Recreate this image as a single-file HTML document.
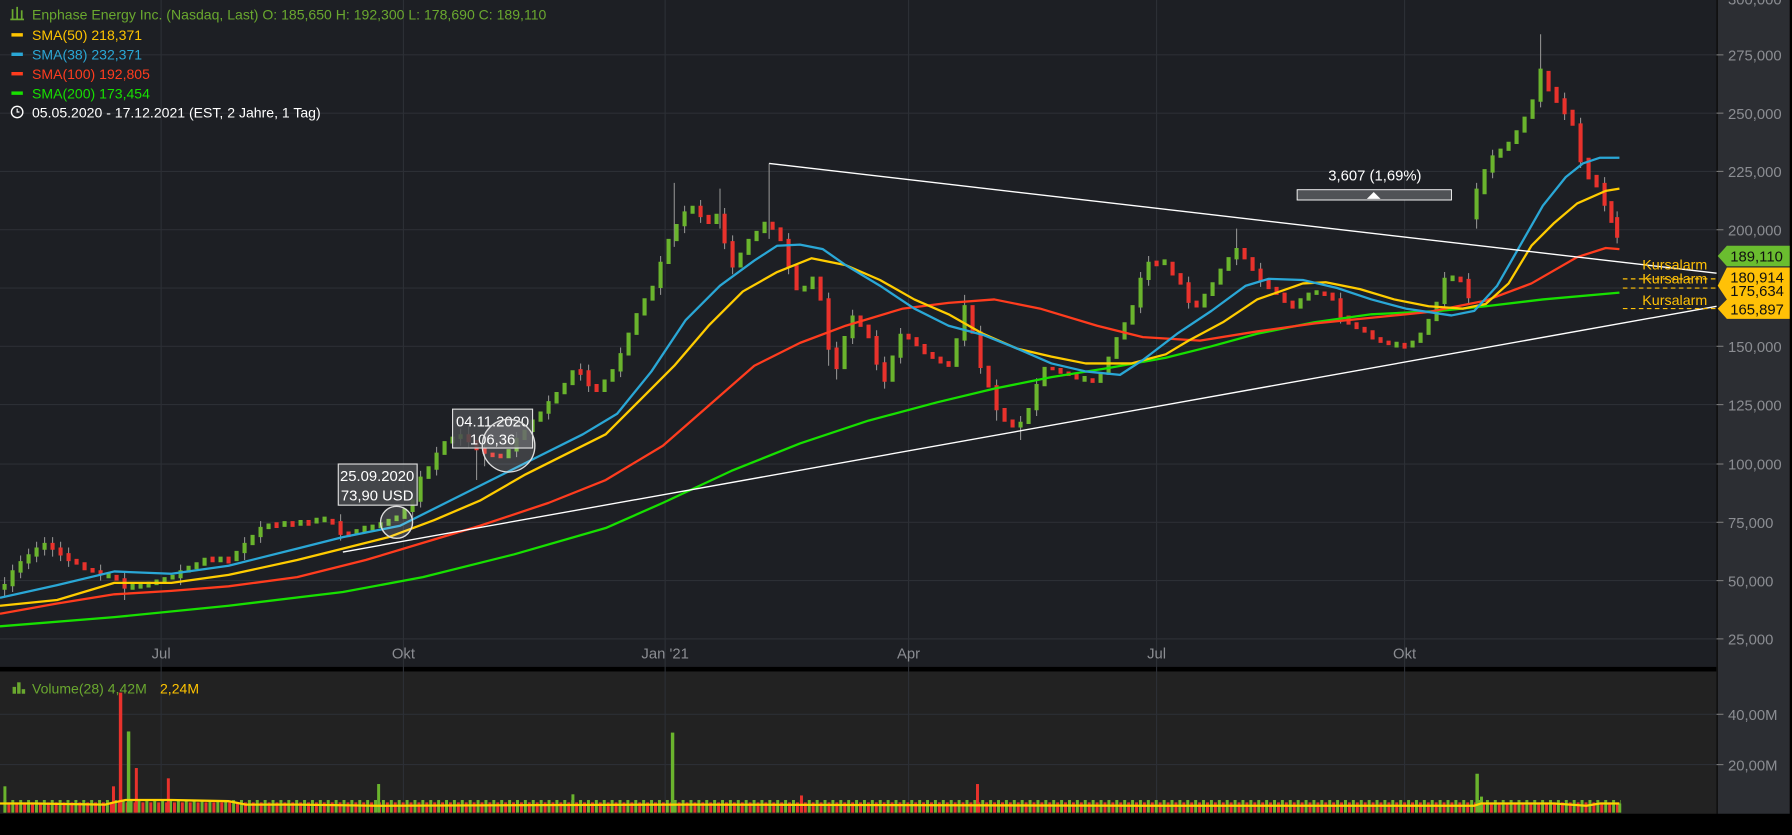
<!DOCTYPE html>
<html><head><meta charset="utf-8"><style>
html,body{margin:0;padding:0;background:#000;overflow:hidden}
svg{display:block}
text{font-family:"Liberation Sans",sans-serif}
</style></head><body>
<svg width="1792" height="835" viewBox="0 0 1568 730.6" preserveAspectRatio="none" xmlns="http://www.w3.org/2000/svg">
<rect x="0" y="0" width="1568" height="731" fill="#000"/>
<rect x="0" y="0" width="1502" height="583.5" fill="#1d1f24"/>
<rect x="1503" y="0" width="63" height="712" fill="#2c2e33"/>
<rect x="0" y="587.5" width="1502" height="124.5" fill="#222222"/>
<line x1="1502.5" y1="0" x2="1502.5" y2="712" stroke="#111" stroke-width="1.5"/>
<g stroke="#2c2f35" stroke-width="1">
<line x1="0" y1="48" x2="1502" y2="48"/><line x1="0" y1="99" x2="1502" y2="99"/><line x1="0" y1="150" x2="1502" y2="150"/><line x1="0" y1="201" x2="1502" y2="201"/><line x1="0" y1="252" x2="1502" y2="252"/><line x1="0" y1="303" x2="1502" y2="303"/><line x1="0" y1="354" x2="1502" y2="354"/><line x1="0" y1="406" x2="1502" y2="406"/><line x1="0" y1="457" x2="1502" y2="457"/><line x1="0" y1="508" x2="1502" y2="508"/><line x1="0" y1="559" x2="1502" y2="559"/>
<line x1="0" y1="625" x2="1502" y2="625"/><line x1="0" y1="669" x2="1502" y2="669"/>
<line x1="141" y1="0" x2="141" y2="712"/><line x1="353" y1="0" x2="353" y2="712"/><line x1="582" y1="0" x2="582" y2="712"/><line x1="795" y1="0" x2="795" y2="712"/><line x1="1012" y1="0" x2="1012" y2="712"/><line x1="1229" y1="0" x2="1229" y2="712"/>
</g>
<g stroke="#777" stroke-width="1">
<line x1="1502" y1="48" x2="1508" y2="48"/><line x1="1502" y1="99" x2="1508" y2="99"/><line x1="1502" y1="150" x2="1508" y2="150"/><line x1="1502" y1="201" x2="1508" y2="201"/><line x1="1502" y1="303" x2="1508" y2="303"/><line x1="1502" y1="354" x2="1508" y2="354"/><line x1="1502" y1="406" x2="1508" y2="406"/><line x1="1502" y1="457" x2="1508" y2="457"/><line x1="1502" y1="508" x2="1508" y2="508"/><line x1="1502" y1="559" x2="1508" y2="559"/><line x1="1502" y1="625" x2="1508" y2="625"/><line x1="1502" y1="669" x2="1508" y2="669"/>
</g>
<g fill="#8b8d92" font-size="13">
<text x="1512" y="4">300,000</text><text x="1512" y="53">275,000</text><text x="1512" y="104">250,000</text><text x="1512" y="155">225,000</text><text x="1512" y="206">200,000</text><text x="1512" y="308">150,000</text><text x="1512" y="359">125,000</text><text x="1512" y="411">100,000</text><text x="1512" y="462">75,000</text><text x="1512" y="513">50,000</text><text x="1512" y="564">25,000</text>
<text x="1512" y="630">40,00M</text><text x="1512" y="674">20,00M</text>
</g>
<g fill="#8b8d92" font-size="13" text-anchor="middle">
<text x="141" y="576">Jul</text><text x="353" y="576">Okt</text><text x="582" y="576">Jan '21</text><text x="795" y="576">Apr</text><text x="1012" y="576">Jul</text><text x="1229" y="576">Okt</text>
</g>
<!-- volume -->
<line x1="3" y1="705.5" x2="1418" y2="705.5" stroke="#6ab42d" stroke-width="11" stroke-dasharray="2.6 4.3"/>
<line x1="6.45" y1="706.5" x2="1418" y2="706.5" stroke="#e8322c" stroke-width="9" stroke-dasharray="2.6 4.3"/>
<g>
<rect x="3" y="688" width="2.6" height="23" fill="#6ab42d"/><rect x="104" y="606" width="3" height="105" fill="#e8322c"/><rect x="111" y="640" width="3" height="71" fill="#6ab42d"/><rect x="118" y="672" width="2.6" height="39" fill="#e8322c"/><rect x="146" y="681" width="2.6" height="30" fill="#e8322c"/><rect x="98" y="688" width="2.6" height="23" fill="#e8322c"/><rect x="330" y="686" width="2.6" height="25" fill="#6ab42d"/><rect x="587" y="641" width="3" height="70" fill="#6ab42d"/><rect x="854" y="686" width="2.6" height="25" fill="#e8322c"/><rect x="1291" y="677" width="3" height="34" fill="#6ab42d"/><rect x="1295" y="697" width="2.6" height="14" fill="#6ab42d"/><rect x="1416" y="703" width="2.6" height="8" fill="#6ab42d"/><rect x="500" y="695" width="2.6" height="16" fill="#6ab42d"/><rect x="700" y="696" width="2.6" height="15" fill="#e8322c"/>
</g>
<polyline fill="none" stroke="#ffd200" stroke-width="2" points="0,703 30,703 92,704 100,702 110,700 150,700 200,701 215,704 260,704 330,705 600,704 1000,705 1290,705 1296,703 1360,703 1388,705 1400,703 1417,703"/>
<!-- candles -->
<path fill="none" stroke="#8a8a8a" stroke-width="1" d="M4 505V522M11 494V518M18 486V506M25 480V498M32 474V492M39 470V486M46 470V487M53 474V491M60 479V496M88 494V508M109 500V525M158 494V512M214 470V490M228 456V475M298 450V473M361 432V453M368 412V444M382 391V416M403 375V390M410 372V392M417 385V420M424 386V408M452 378V400M480 346V367M508 318V333M515 319V343M543 304V330M578 224V258M590 160V216M599 180V204M613 175V195M630 165V200M634 182V218M641 206V240M673 143V209M690 204V240M725 256V320M732 299V332M746 271V301M767 289V324M774 312V340M788 287V318M844 258V303M858 285V327M872 332V368M893 364V385M907 331V364M998 238V274M1005 224V250M1040 242V270M1082 200V232M1103 230V251M1173 256V283M1264 238V271M1285 239V266M1292 160V200M1306 131V156M1348 30V94M1369 81V105M1383 103V147M1404 155V185M1415 185V213"/>
<path fill="none" stroke="#6ab42d" stroke-width="3.6" d="M4 511V516M11 499V513M18 491V501M25 485V493M32 479V487M39 475V481M95 501V506M116 511V516M123 510V515M130 509V514M137 507V512M144 505V510M151 503V507M158 499V506M165 495V501M172 492V498M179 488V495M193 487V492M207 482V491M214 475V484M221 468V477M228 461V470M235 458V463M249 456V461M263 455V460M277 453V458M284 452V457M312 463V468M319 460V466M326 459V464M333 457V462M340 454V460M347 451V456M354 445V454M361 437V448M368 417V439M375 408V419M382 396V411M389 386V398M396 382V388M403 380V384M445 393V401M452 383V395M459 376V385M466 367V378M473 360V369M480 351V362M487 343V353M494 335V345M501 324V337M529 332V343M536 323V334M543 309V325M550 291V311M557 274V293M564 261V276M571 250V263M578 229V252M585 209V231M592 196V211M599 185V198M606 180V187M627 187V196M648 221V234M655 209V223M662 202V211M669 194V204M704 250V255M711 242V253M739 294V323M746 276V296M781 311V334M788 292V313M837 296V321M844 267V298M893 369V374M900 357V371M907 336V359M914 321V338M949 329V334M963 326V335M970 312V328M977 295V314M984 282V297M991 267V284M998 243V269M1005 229V245M1019 227V232M1054 257V269M1061 247V259M1068 235V249M1075 225V237M1082 217V227M1138 261V270M1145 256V263M1152 254V258M1222 299V304M1236 298V304M1243 291V300M1250 279V293M1257 264V281M1264 243V266M1271 241V246M1292 165V192M1299 148V170M1306 136V151M1313 130V138M1320 124V132M1327 114V126M1334 102V116M1341 87V104M1348 60V89"/>
<path fill="none" stroke="#e8322c" stroke-width="3.6" d="M46 475V481M53 479V486M60 484V491M67 489V494M74 492V499M81 497V501M88 499V503M102 503V508M109 506V515M186 487V492M200 487V493M242 457V462M256 456V461M270 455V460M291 454V459M298 456V468M305 465V470M410 380V387M417 385V394M424 392V397M431 396V400M438 397V401M508 323V328M515 324V338M522 336V343M613 180V190M620 188V196M634 187V213M641 211V234M676 194V201M683 199V211M690 209V234M697 232V254M718 242V263M725 261V306M732 304V323M753 276V286M760 284V296M767 294V319M774 317V334M795 292V297M802 295V303M809 301V310M816 308V314M823 312V318M830 316V321M851 267V292M858 290V322M865 320V339M872 337V359M879 357V369M886 367V374M921 321V324M928 322V327M935 325V329M942 327V332M956 331V335M1012 228V233M1026 229V241M1033 239V249M1040 247V265M1047 263V269M1089 217V227M1096 225V237M1103 235V246M1110 244V253M1117 251V258M1124 256V265M1131 263V270M1159 255V259M1166 256V263M1173 261V278M1180 276V284M1187 282V288M1194 286V291M1201 289V297M1208 295V300M1215 298V302M1229 300V305M1278 242V247M1285 244V261M1355 62V80M1362 76V90M1369 86V100M1376 96V110M1383 108V142M1390 138V157M1397 153V164M1404 160V180M1410 176V195M1415 190V208"/>
<g fill="none" stroke-width="2" stroke-linejoin="round">
<polyline stroke="#17e000" points="0,548 100,540 200,530 300,518 370,505 450,485 530,462 580,440 640,412 700,388 760,368 820,352 870,340 920,330 970,322 1020,313 1060,303 1100,292 1150,282 1200,275 1260,272 1300,268 1350,262 1417,256"/>
<polyline stroke="#ff3c1e" points="0,537 50,528 100,520 150,517 200,513 260,505 320,490 370,475 420,460 480,440 530,420 580,390 620,355 660,320 700,300 740,285 790,270 830,265 870,262 910,270 960,285 1000,295 1050,298 1100,290 1150,283 1200,278 1250,273 1300,263 1340,248 1380,225 1405,217 1417,218"/>
<polyline stroke="#ffcc00" points="0,530 50,525 100,510 150,510 200,503 260,490 300,480 340,470 380,455 420,438 460,415 500,395 530,380 560,350 590,320 620,285 650,255 680,238 710,226 740,232 770,245 800,262 830,275 860,292 890,305 920,312 950,318 990,318 1020,310 1040,298 1070,282 1100,262 1140,248 1160,247 1190,253 1220,262 1250,268 1280,270 1300,266 1320,248 1340,215 1360,195 1380,178 1405,167 1417,165"/>
<polyline stroke="#2aa7d6" points="0,523 50,512 100,500 150,502 200,495 260,480 300,470 350,460 390,440 430,420 470,400 510,380 540,362 570,325 600,280 630,250 660,228 680,215 700,214 720,218 740,232 770,250 800,270 830,285 860,293 890,305 920,318 950,325 980,328 1000,315 1030,292 1060,272 1090,250 1110,244 1140,245 1170,252 1200,262 1230,270 1270,276 1290,272 1310,250 1330,215 1350,180 1370,155 1385,143 1400,138 1417,138"/>
</g>
<line x1="673" y1="143" x2="1502" y2="239" stroke="#fff" stroke-width="1.2"/>
<line x1="300" y1="483" x2="1502" y2="268" stroke="#fff" stroke-width="1.2"/>
<rect x="296" y="406" width="69" height="36" fill="#4a4c50" fill-opacity="0.85" stroke="#ddd" stroke-width="1"/>
<text x="330" y="421" fill="#fff" font-size="13" text-anchor="middle">25.09.2020</text>
<text x="330" y="438" fill="#fff" font-size="13" text-anchor="middle">73,90 USD</text>
<circle cx="347" cy="457" r="14" fill="#fff" fill-opacity="0.15" stroke="#ddd" stroke-width="1.2"/>
<rect x="396" y="358" width="70" height="34" fill="#4a4c50" fill-opacity="0.85" stroke="#ddd" stroke-width="1"/>
<text x="431" y="373" fill="#fff" font-size="13" text-anchor="middle">04.11.2020</text>
<text x="431" y="389" fill="#fff" font-size="13" text-anchor="middle">106,36</text>
<circle cx="445" cy="390" r="23" fill="#fff" fill-opacity="0.15" stroke="#ddd" stroke-width="1.2"/>
<text x="1203" y="158" fill="#fff" font-size="13" text-anchor="middle">3,607 (1,69%)</text>
<rect x="1135" y="166" width="135" height="9" fill="#505256" stroke="#fff" stroke-width="0.8"/>
<polygon points="1196,174 1202,168 1208,174" fill="#fff"/>
<g stroke="#ffc107" stroke-width="1" stroke-dasharray="4,3">
<line x1="1420" y1="244" x2="1502" y2="244"/><line x1="1420" y1="252" x2="1502" y2="252"/><line x1="1420" y1="270" x2="1502" y2="270"/>
</g>
<g fill="#ffc107" font-size="12.5">
<text x="1437" y="236">Kursalarm</text><text x="1437" y="248">Kursalarm</text><text x="1437" y="267">Kursalarm</text>
</g>
<polygon points="1503,224 1511,215 1566,215 1566,233 1511,233" fill="#6abd2f"/>
<text x="1514" y="229" font-size="13" fill="#111">189,110</text>
<polygon points="1503,250 1511,234 1566,234 1566,262 1511,262" fill="#ffc107"/>
<text x="1514" y="247" font-size="13" fill="#111">180,914</text>
<text x="1514" y="259" font-size="13" fill="#111">175,634</text>
<polygon points="1503,270 1511,262 1566,262 1566,279 1511,279" fill="#ffc107"/>
<text x="1514" y="275" font-size="13" fill="#111">165,897</text>
<g font-size="12.3">
<g fill="#6aa82f" stroke="#6aa82f" stroke-width="1.5"><line x1="11" y1="8" x2="11" y2="17"/><line x1="15" y1="6" x2="15" y2="17"/><line x1="19" y1="9" x2="19" y2="17"/><line x1="9" y1="17" x2="21" y2="17"/></g>
<text x="28" y="17" fill="#6aa82f">Enphase Energy Inc. (Nasdaq, Last)  O: 185,650  H: 192,300  L: 178,690  C: 189,110</text>
<rect x="10" y="29" width="10" height="3" fill="#ffc400"/><text x="28" y="35" fill="#ffc400">SMA(50)  218,371</text>
<rect x="10" y="46" width="10" height="3" fill="#2aa7d6"/><text x="28" y="52" fill="#2aa7d6">SMA(38)  232,371</text>
<rect x="10" y="63" width="10" height="3" fill="#ff3c1e"/><text x="28" y="69" fill="#ff3c1e">SMA(100)  192,805</text>
<rect x="10" y="80" width="10" height="3" fill="#17e000"/><text x="28" y="86" fill="#17e000">SMA(200)  173,454</text>
<circle cx="15" cy="98" r="5" fill="none" stroke="#fff" stroke-width="1.2"/><path d="M15 95v3h2" stroke="#fff" fill="none"/>
<text x="28" y="103" fill="#fff">05.05.2020 - 17.12.2021  (EST, 2 Jahre, 1 Tag)</text>
<g fill="#6aa82f"><rect x="11" y="601" width="3" height="6"/><rect x="15" y="597" width="3" height="10"/><rect x="19" y="603" width="3" height="4"/></g>
<text x="28" y="607" fill="#6aa82f">Volume(28)  4,42M</text><text x="140" y="607" fill="#ffc400">2,24M</text>
</g>
</svg>
</body></html>
